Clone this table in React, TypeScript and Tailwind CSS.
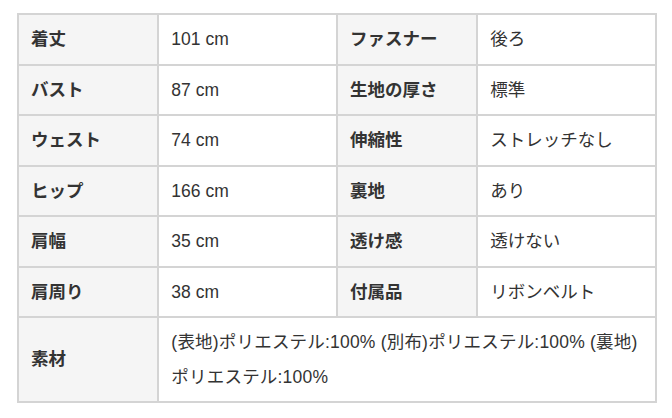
import React from 'react';

const rows: [string, string, string, string][] = [
  ['着丈', '101 cm', 'ファスナー', '後ろ'],
  ['バスト', '87 cm', '生地の厚さ', '標準'],
  ['ウェスト', '74 cm', '伸縮性', 'ストレッチなし'],
  ['ヒップ', '166 cm', '裏地', 'あり'],
  ['肩幅', '35 cm', '透け感', '透けない'],
  ['肩周り', '38 cm', '付属品', 'リボンベルト'],
];

const th = 'border-2 border-[#d4d4d4] bg-[#f5f5f5] px-3 py-[7px] text-left align-middle font-bold text-[#333]';
const td = 'border-2 border-[#d4d4d4] bg-white px-3 py-[7px] text-left align-middle font-normal text-[#333]';

const App: React.FC = () => {
  return (
    <div
      className="min-h-[418px] w-[672px] bg-white pl-[17px] pt-[13px]"
      style={{ fontFamily: '"Liberation Sans", "Noto Sans CJK JP", sans-serif' }}
    >
      <table className="w-[640px] table-fixed border-collapse text-[17.5px] leading-[34.5px]">
        <colgroup>
          <col className="w-[22%]" />
          <col className="w-[28%]" />
          <col className="w-[22%]" />
          <col className="w-[28%]" />
        </colgroup>
        <tbody>
          {rows.map(([k1, v1, k2, v2]) => (
            <tr key={k1}>
              <th className={th}>{k1}</th>
              <td className={td}>{v1}</td>
              <th className={th}>{k2}</th>
              <td className={td}>{v2}</td>
            </tr>
          ))}
          <tr>
            <th className={th}>素材</th>
            <td className={`${td} tracking-[0.2px]`} colSpan={3}>
              (表地)ポリエステル:100% (別布)ポリエステル:100% (裏地)
              <br />
              ポリエステル:100%
            </td>
          </tr>
        </tbody>
      </table>
    </div>
  );
};

export default App;
